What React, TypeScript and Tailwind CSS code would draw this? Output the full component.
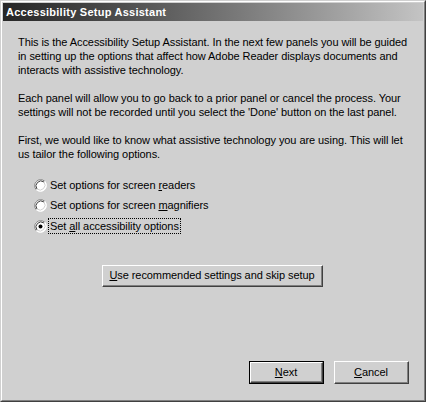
import type { ReactNode } from 'react';

const font = { fontFamily: '"Liberation Sans", Arial, sans-serif' };

function Radio({ checked }: { checked?: boolean }) {
  return (
    <svg width="13" height="13" viewBox="0 0 13 13" className="shrink-0">
      {/* 3D ring: dark top-left, light bottom-right */}
      <circle cx="6.5" cy="6.5" r="6" fill="#ffffff" />
      <path d="M2.26 10.74 A6 6 0 0 1 10.74 2.26" fill="none" stroke="#808080" strokeWidth="1" />
      <path d="M3.0 10.0 A5 5 0 0 1 10.0 3.0" fill="none" stroke="#404040" strokeWidth="1" />
      <path d="M10.74 2.26 A6 6 0 0 1 2.26 10.74" fill="none" stroke="#ffffff" strokeWidth="1" />
      <path d="M10.0 3.0 A5 5 0 0 1 3.0 10.0" fill="none" stroke="#d0d0d0" strokeWidth="1" />
      {checked && <circle cx="6.5" cy="6.5" r="2" fill="#000000" />}
    </svg>
  );
}

function RadioRow({ children, checked, focused }: { children: ReactNode; checked?: boolean; focused?: boolean }) {
  return (
    <div className="flex h-[20px] items-center pl-[31px]">
      <Radio checked={checked} />
      <span
        className={
          focused
            ? 'ml-[1px] border border-dotted border-black px-[1px] leading-[14px]'
            : 'ml-[2px] border border-transparent leading-[14px]'
        }
      >
        {children}
      </span>
    </div>
  );
}

function Button({ children, primary, className }: { children: ReactNode; primary?: boolean; className?: string }) {
  const face = (
    <div className="h-full border-t border-l border-b border-r border-t-white border-l-white border-b-[#404040] border-r-[#404040]">
      <div className="flex h-full items-center justify-center border-r border-b border-[#808080] leading-none">
        {children}
      </div>
    </div>
  );
  return primary ? (
    <div className={`border border-black ${className ?? ''}`}>{face}</div>
  ) : (
    <div className={className}>{face}</div>
  );
}

export default function App() {
  return (
    <div
      className="h-[402px] w-[426px] border-t border-l border-b border-r border-t-[#d0d0d0] border-l-[#d0d0d0] border-b-[#404040] border-r-[#404040] bg-[#d0d0d0] text-[11px] text-black"
      style={font}
    >
      <div className="flex h-full flex-col border-t border-l border-b border-r border-t-white border-l-white border-b-[#808080] border-r-[#808080] p-[1px]">
        {/* Title bar */}
        <div className="flex h-[18px] shrink-0 items-center bg-gradient-to-r from-[#262626] to-[#c4c4c4] pl-[3px]">
          <span className="text-[11px] font-bold tracking-[0.25px] text-white">Accessibility Setup Assistant</span>
        </div>

        {/* Body */}
        <div className="flex flex-1 flex-col pl-[15px] pt-[14px] tracking-[-0.07px]">
          <p className="whitespace-nowrap leading-[14px]">
            This is the Accessibility Setup Assistant. In the next few panels you will be guided
            <br />
            in setting up the options that affect how Adobe Reader displays documents and
            <br />
            interacts with assistive technology.
          </p>
          <p className="mt-[14px] whitespace-nowrap leading-[14px]">
            Each panel will allow you to go back to a prior panel or cancel the process. Your
            <br />
            settings will not be recorded until you select the 'Done' button on the last panel.
          </p>
          <p className="mt-[14px] whitespace-nowrap leading-[14px]">
            First, we would like to know what assistive technology you are using. This will let
            <br />
            us tailor the following options.
          </p>

          <div className="-ml-[15px] mt-[14px] flex flex-col">
            <RadioRow>
              Set options for screen <u>r</u>eaders
            </RadioRow>
            <RadioRow>
              Set options for screen <u>m</u>agnifiers
            </RadioRow>
            <div className="mt-[1px]">
              <RadioRow checked focused>
                Set <u>a</u>ll accessibility options
              </RadioRow>
            </div>
          </div>

          <div className="-ml-[15px] mt-[29px] flex">
            <Button className="ml-[99px] h-[22px] w-[221px]">
              <span>
                <u>U</u>se recommended settings and skip setup
              </span>
            </Button>
          </div>

          <div className="mt-auto mb-[15px] flex justify-end gap-[10px] pr-[14px]">
            <Button primary className="h-[23px] w-[75px]">
              <span>
                <u>N</u>ext
              </span>
            </Button>
            <Button className="h-[23px] w-[75px]">
              <span>
                <u>C</u>ancel
              </span>
            </Button>
          </div>
        </div>
      </div>
    </div>
  );
}
